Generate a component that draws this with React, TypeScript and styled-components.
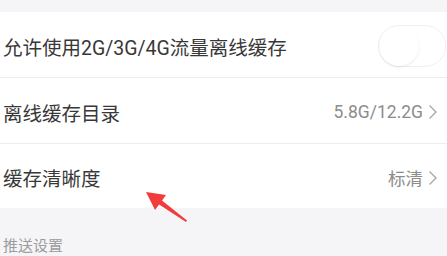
import React from "react";
import styled, { createGlobalStyle } from "styled-components";

const GlobalStyle = createGlobalStyle`
  html, body {
    margin: 0;
    padding: 0;
    background: #f5f5f8;
  }
  body {
    font-family: Roboto, "Noto Sans CJK SC", sans-serif;
  }
`;

interface RowData {
  label: string;
  value?: string;
  toggle?: boolean;
}

const rows: RowData[] = [
  { label: "允许使用2G/3G/4G流量离线缓存", toggle: true },
  { label: "离线缓存目录", value: "5.8G/12.2G" },
  { label: "缓存清晰度", value: "标清" },
];

const Page = styled.div`
  position: relative;
  width: 447px;
  height: 256px;
  overflow: hidden;
  background: #f5f5f8;
  padding-top: 12px;
  box-sizing: border-box;
`;

const Section = styled.div`
  background: #ffffff;
  display: flex;
  flex-direction: column;
`;

const Row = styled.div<{ $last?: boolean }>`
  display: flex;
  align-items: center;
  justify-content: space-between;
  padding: 3px 9px 0 3px;
  box-sizing: border-box;
  border-bottom: ${(p) => (p.$last ? "none" : "1px solid #ededed")};
  height: ${(p) => (p.$last ? "64px" : "66px")};
`;

const Label = styled.div`
  font-size: 19.5px;
  color: #383838;
`;

const Right = styled.div`
  display: flex;
  align-items: center;
  gap: 5px;
`;

const Value = styled.div`
  font-size: 17.5px;
  color: #8c8c8c;
`;

const Chevron = styled.svg`
  width: 10px;
  height: 16px;
  display: block;
`;

const Toggle = styled.div`
  width: 68px;
  height: 42px;
  border-radius: 21px;
  border: 1px solid #f0f0f0;
  box-sizing: border-box;
  background: #ffffff;
  margin-right: -8px;
  display: flex;
  align-items: center;
`;

const Knob = styled.div`
  width: 40px;
  height: 40px;
  border-radius: 50%;
  background: #ffffff;
  box-shadow: 0 1px 2px rgba(0, 0, 0, 0.09);
`;

const SectionTitle = styled.div`
  padding: 26px 0 0 3px;
  font-size: 15px;
  color: #9c9c9c;
`;

const Arrow = styled.svg`
  position: absolute;
  left: 0;
  top: 0;
  width: 447px;
  height: 256px;
  pointer-events: none;
`;

export default function App() {
  return (
    <>
      <GlobalStyle />
      <Page>
        <Section>
          {rows.map((r, i) => (
            <Row key={r.label} $last={i === rows.length - 1}>
              <Label>{r.label}</Label>
              {r.toggle ? (
                <Toggle>
                  <Knob />
                </Toggle>
              ) : (
                <Right>
                  <Value>{r.value}</Value>
                  <Chevron viewBox="0 0 10 16">
                    <path d="M1.5 1.5 L8 8 L1.5 14.5" fill="none" stroke="#a8a8a8" strokeWidth="1.4" />
                  </Chevron>
                </Right>
              )}
            </Row>
          ))}
        </Section>
        <SectionTitle>推送设置</SectionTitle>
        <Arrow viewBox="0 0 447 256">
          <polygon
            points="146,192 166,195 162,200.6 187,220.5 186,222 159.1,204.6 155,210"
            fill="#f23b3b"
          />
        </Arrow>
      </Page>
    </>
  );
}
